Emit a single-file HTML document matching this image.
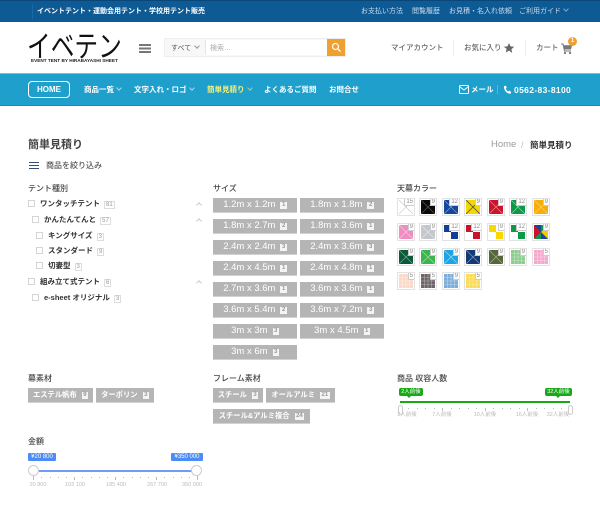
<!DOCTYPE html>
<html lang="ja"><head><meta charset="utf-8"><title>簡単見積り</title>
<style>
html,body{margin:0;padding:0;background:#fff}
body{width:600px;height:509px;position:relative;overflow:hidden;font-family:"Liberation Sans","Noto Sans CJK JP",sans-serif;color:#333}
.a{position:absolute}
.t{position:absolute;white-space:nowrap;line-height:12px;height:12px;margin-top:1px}
.top{font-size:7px;color:#c9dcea;top:5px}
.nav{font-size:7.5px;color:#fff;font-weight:700;top:83px}
.hd{font-size:7.5px;color:#666;top:41px;font-weight:500}
.h{font-size:8px;color:#444;font-weight:500}
.li{font-size:7.5px;color:#333;font-weight:700}
.li i{font-style:normal;font-weight:400;font-size:6px;color:#999;border:1px solid #ddd;padding:0 1px;margin-left:4px;line-height:6px;display:inline-block;vertical-align:0}
.cb{position:absolute;width:5px;height:5px;border:1px solid #d5d5d5;background:#fff}
.up{position:absolute;width:3px;height:3px;border-left:1px solid #ccc;border-top:1px solid #ccc;transform:rotate(45deg)}
.b{position:absolute;height:14px;background:#b5b5b5;border-bottom:1.5px solid #d2d2d2;color:#fff;font-size:9.5px;line-height:14px;white-space:nowrap;display:flex;align-items:center;justify-content:center}
.b i{font-style:normal;font-size:6px;font-weight:700;background:#f4f4f4;color:#999;padding:0 1.5px;margin-left:5px;display:block;line-height:7px}
.f{font-size:7.3px;font-weight:700}
.s{position:absolute;width:14px;height:14px;border:1.5px solid #e2e2e2;padding:1px;background:#fff;overflow:hidden}
.s svg{display:block;width:14px;height:14px}
.s b{position:absolute;right:0;top:0;background:#fff;border:1px solid #ccc;border-width:0 0 1px 1px;font-size:6px;font-weight:400;color:#888;line-height:6px;padding:0 1px}
.chev{display:inline-block;width:3px;height:3px;border-right:1px solid currentColor;border-bottom:1px solid currentColor;transform:rotate(45deg);margin-left:3px;vertical-align:2px;opacity:.6}
.tick{position:absolute;width:1px;background:#bbb}
.n{position:absolute;font-size:5.5px;color:#bbb;white-space:nowrap;line-height:7px;transform:translateX(-50%)}
</style></head><body>

<div class="a" style="left:0;top:0;width:600px;height:22px;background:#0e5a94;border-top:1px solid #0a4678;box-sizing:border-box"></div>
<div class="a" style="left:32px;top:4px;width:1px;height:15px;background:#1a6aa5"></div>
<div class="t" style="left:37px;top:5px;font-size:7px;color:#fff;font-weight:700">イベントテント・運動会用テント・学校用テント販売</div>
<div class="t top" style="left:361px">お支払い方法</div>
<div class="t top" style="left:412px">閲覧履歴</div>
<div class="t top" style="left:449px">お見積・名入れ依頼</div>
<div class="t top" style="left:519px">ご利用ガイド<span class="chev"></span></div>

<div class="t" style="left:27px;top:28px;height:30px;line-height:30px;font-size:30px;color:#111;transform-origin:0 50%;transform:scaleX(.79);font-family:'Noto Sans CJK JP',sans-serif;font-weight:400">イベテン</div>
<div class="t" style="left:31px;top:54px;font-size:4.7px;color:#222;font-weight:700">EVENT TENT BY HIRABAYASHI SHEET</div>

<div class="a" style="left:139px;top:44px;width:12px;height:1.5px;background:#777;box-shadow:0 3.5px 0 #777,0 7px 0 #777"></div>
<div class="a" style="left:165px;top:39px;width:180px;height:17px;background:#f8f8f8;box-shadow:0 0 0 1px #eee"></div>
<div class="a" style="left:205px;top:40px;width:122px;height:15px;background:#fff;border-left:1px solid #e5e5e5"></div>
<div class="t" style="left:171px;top:42px;font-size:7px;color:#555">すべて<span class="chev" style="margin-left:4px"></span></div>
<div class="t" style="left:210px;top:42px;font-size:7px;color:#aaa">検索…</div>
<div class="a" style="left:327px;top:39px;width:18px;height:17px;background:#f0a030"></div>
<svg class="a" style="left:331px;top:42px" width="11" height="11" viewBox="0 0 11 11"><circle cx="4.5" cy="4.5" r="3" fill="none" stroke="#fff" stroke-width="1.2"/><path d="M6.8 6.8L9.5 9.500" stroke="#fff" stroke-width="1.3"/></svg>

<div class="t hd" style="left:391px">マイアカウント</div>
<div class="a" style="left:453px;top:40px;width:1px;height:16px;background:#eee"></div>
<div class="t hd" style="left:464px">お気に入り</div>
<svg class="a" style="left:503px;top:42px" width="12" height="12" viewBox="0 0 12 12"><path d="M6 1l1.5 3.4 3.700.4-2.800 2.500.8 3.700L6 8.600l-3.200 1.900.8-3.700L.8 4.800l3.700-.4z" fill="#666"/></svg>
<div class="a" style="left:525px;top:40px;width:1px;height:16px;background:#eee"></div>
<div class="t hd" style="left:536px">カート</div>
<svg class="a" style="left:560px;top:43px" width="13" height="12" viewBox="0 0 13 12"><path d="M1 1h2l1.500 7h6.500" fill="none" stroke="#777" stroke-width="1"/><path d="M3.400 2.200h8.600l-1 4.300H4.300z" fill="#777"/><circle cx="5" cy="10" r="1.100" fill="#777"/><circle cx="10" cy="10" r="1.100" fill="#777"/></svg>
<div class="a" style="left:568px;top:37px;width:9px;height:9px;border-radius:50%;background:#f0a030;color:#fff;font-size:6px;line-height:9px;text-align:center;font-weight:700">1</div>

<div class="a" style="left:0;top:73px;width:600px;height:33px;background:#1f9fcc;border-top:1px solid #6cc3e2;border-bottom:1px solid #1890bb;box-sizing:border-box"></div>
<div class="a" style="left:28px;top:81px;width:40px;height:15px;border:1.5px solid #fff;border-radius:4px;color:#fff;font-size:8px;font-weight:700;line-height:15px;text-align:center">HOME</div>
<div class="t nav" style="left:84px">商品一覧<span class="chev"></span></div>
<div class="t nav" style="left:134px">文字入れ・ロゴ<span class="chev"></span></div>
<div class="t nav" style="left:207px;color:#f6f07a">簡単見積り<span class="chev"></span></div>
<div class="t nav" style="left:264px">よくあるご質問</div>
<div class="t nav" style="left:329px">お問合せ</div>
<svg class="a" style="left:459px;top:85px" width="10" height="9" viewBox="0 0 10 9"><rect x=".5" y=".5" width="9" height="8" rx="1" fill="none" stroke="#fff"/><path d="M1 2l4 3 4-3" fill="none" stroke="#fff"/></svg>
<div class="t nav" style="left:471px">メール</div>
<div class="a" style="left:497px;top:85px;width:1px;height:9px;background:#59b8da"></div>
<svg class="a" style="left:503px;top:85px" width="9" height="10" viewBox="0 0 9 10"><path d="M1 1.200L2.800.6l1 2.200-1 .8c.4 1.200 1.200 2.200 2.400 2.900l1-.9 2 1.400-.7 1.700C4 9 .6 5.200 1 1.200z" fill="#fff"/></svg>
<div class="t nav" style="left:514px;font-size:8.5px;letter-spacing:.35px">0562-83-8100</div>

<div class="t" style="left:28px;top:138px;font-size:11px;color:#444;font-weight:700">簡単見積り</div>
<div class="t" style="left:491px;top:138px;font-size:9.5px;color:#999">Home</div>
<div class="t" style="left:521px;top:138px;font-size:9px;color:#bbb">/</div>
<div class="t" style="left:530px;top:138px;font-size:8.5px;color:#333;font-weight:700">簡単見積り</div>
<div class="a" style="left:29px;top:162px;width:10px;height:1px;background:#34506e;box-shadow:0 3px 0 #34506e,0 6px 0 #34506e"></div>
<div class="t" style="left:46px;top:159px;font-size:8px;color:#555;font-weight:500">商品を絞り込み</div>

<div class="t h" style="left:28px;top:182px">テント種別</div>
<div class="cb" style="left:28px;top:200px"></div><div class="t li" style="left:40px;top:197px">ワンタッチテント<i>81</i></div><div class="up" style="left:197px;top:203px"></div>
<div class="cb" style="left:32px;top:216px"></div><div class="t li" style="left:44px;top:213px">かんたんてんと<i>57</i></div><div class="up" style="left:197px;top:219px"></div>
<div class="cb" style="left:36px;top:232px"></div><div class="t li" style="left:48px;top:229px">キングサイズ<i>3</i></div>
<div class="cb" style="left:36px;top:247px"></div><div class="t li" style="left:48px;top:244px">スタンダード<i>9</i></div>
<div class="cb" style="left:36px;top:262px"></div><div class="t li" style="left:48px;top:259px">切妻型<i>3</i></div>
<div class="cb" style="left:28px;top:278px"></div><div class="t li" style="left:40px;top:275px">組み立て式テント<i>6</i></div><div class="up" style="left:197px;top:281px"></div>
<div class="cb" style="left:32px;top:294px"></div><div class="t li" style="left:44px;top:291px">e-sheet オリジナル<i>3</i></div>

<div class="t h" style="left:213px;top:182px">サイズ</div>
<div class="b" style="left:213px;top:198px;width:84px">1.2m x 1.2m<i>1</i></div>
<div class="b" style="left:300px;top:198px;width:84px">1.8m x 1.8m<i>2</i></div>
<div class="b" style="left:213px;top:219px;width:84px">1.8m x 2.7m<i>2</i></div>
<div class="b" style="left:300px;top:219px;width:84px">1.8m x 3.6m<i>1</i></div>
<div class="b" style="left:213px;top:240px;width:84px">2.4m x 2.4m<i>3</i></div>
<div class="b" style="left:300px;top:240px;width:84px">2.4m x 3.6m<i>3</i></div>
<div class="b" style="left:213px;top:261px;width:84px">2.4m x 4.5m<i>1</i></div>
<div class="b" style="left:300px;top:261px;width:84px">2.4m x 4.8m<i>1</i></div>
<div class="b" style="left:213px;top:282px;width:84px">2.7m x 3.6m<i>1</i></div>
<div class="b" style="left:300px;top:282px;width:84px">3.6m x 3.6m<i>1</i></div>
<div class="b" style="left:213px;top:303px;width:84px">3.6m x 5.4m<i>2</i></div>
<div class="b" style="left:300px;top:303px;width:84px">3.6m x 7.2m<i>3</i></div>
<div class="b" style="left:213px;top:324px;width:84px">3m x 3m<i>3</i></div>
<div class="b" style="left:300px;top:324px;width:84px">3m x 4.5m<i>1</i></div>
<div class="b" style="left:213px;top:345px;width:84px">3m x 6m<i>3</i></div>

<div class="t h" style="left:397px;top:182px">天幕カラー</div>

<div class="s" style="left:397px;top:198px"><svg viewBox="0 0 14 14"><rect width="14" height="14" fill="#fff"/><path d="M0 0L14 14M14 0L0 14" stroke="#ccc" stroke-width=".7"/></svg><b>15</b></div>
<div class="s" style="left:419px;top:198px"><svg viewBox="0 0 14 14"><rect width="14" height="14" fill="#0a0a0a"/><path d="M0 0L14 14M14 0L0 14" stroke="#555" stroke-width=".7"/></svg><b>9</b></div>
<div class="s" style="left:442px;top:198px"><svg viewBox="0 0 14 14"><rect width="14" height="14" fill="#14489c"/><path d="M0 0L14 14M14 0L0 14" stroke="#7fa0d0" stroke-width=".7"/></svg><b>12</b></div>
<div class="s" style="left:464px;top:198px"><svg viewBox="0 0 14 14"><rect width="14" height="14" fill="#f5d800"/><path d="M0 0L14 14M14 0L0 14" stroke="#555" stroke-width=".8"/></svg><b>9</b></div>
<div class="s" style="left:487px;top:198px"><svg viewBox="0 0 14 14"><rect width="14" height="14" fill="#c8142c"/><path d="M0 0L14 14M14 0L0 14" stroke="#e88" stroke-width=".7"/></svg><b>9</b></div>
<div class="s" style="left:509px;top:198px"><svg viewBox="0 0 14 14"><rect width="14" height="14" fill="#0c9a48"/><path d="M0 0L14 14M14 0L0 14" stroke="#8cd0a8" stroke-width=".7"/></svg><b>12</b></div>
<div class="s" style="left:532px;top:198px"><svg viewBox="0 0 14 14"><rect width="14" height="14" fill="#f8ae08"/><path d="M0 0L14 14M14 0L0 14" stroke="#fbd070" stroke-width=".7"/></svg><b>9</b></div>

<div class="s" style="left:397px;top:223px"><svg viewBox="0 0 14 14"><rect width="14" height="14" fill="#f08cc0"/><path d="M0 0L14 14M14 0L0 14" stroke="#f9c8e0" stroke-width=".7"/></svg><b>9</b></div>
<div class="s" style="left:419px;top:223px"><svg viewBox="0 0 14 14"><rect width="14" height="14" fill="#c4c8cc"/><path d="M0 0L14 14M14 0L0 14" stroke="#e4e6e8" stroke-width=".7"/></svg><b>9</b></div>
<div class="s" style="left:442px;top:223px"><svg viewBox="0 0 14 14"><rect width="14" height="14" fill="#fff"/><rect width="7" height="7" fill="#123f96"/><rect x="7" y="7" width="7" height="7" fill="#123f96"/></svg><b>12</b></div>
<div class="s" style="left:464px;top:223px"><svg viewBox="0 0 14 14"><rect width="14" height="14" fill="#fff"/><rect width="7" height="7" fill="#c8142c"/><rect x="7" y="7" width="7" height="7" fill="#c8142c"/></svg><b>12</b></div>
<div class="s" style="left:487px;top:223px"><svg viewBox="0 0 14 14"><rect width="14" height="14" fill="#fff"/><rect width="7" height="7" fill="#f8d800"/><rect x="7" y="7" width="7" height="7" fill="#f8d800"/></svg><b>9</b></div>
<div class="s" style="left:509px;top:223px"><svg viewBox="0 0 14 14"><rect width="14" height="14" fill="#fff"/><rect width="7" height="7" fill="#0c9a48"/><rect x="7" y="7" width="7" height="7" fill="#0c9a48"/></svg><b>12</b></div>
<div class="s" style="left:532px;top:223px"><svg viewBox="0 0 14 14"><rect width="14" height="14" fill="#14489c"/><path d="M0 0L7 7L0 14z" fill="#c8142c"/><path d="M14 14L7 7L14 0z" fill="#f8ca00"/><path d="M7 0L14 0L7 7z" fill="#0c9a48"/><path d="M0 14L7 14L7 7z" fill="#0c9a48"/></svg><b>9</b></div>

<div class="s" style="left:397px;top:248px"><svg viewBox="0 0 14 14"><rect width="14" height="14" fill="#0c5a3a"/><path d="M0 0L14 14M14 0L0 14" stroke="#7aa896" stroke-width=".7"/></svg><b>9</b></div>
<div class="s" style="left:419px;top:248px"><svg viewBox="0 0 14 14"><rect width="14" height="14" fill="#3cb450"/><path d="M0 0L14 14M14 0L0 14" stroke="#a0dcaa" stroke-width=".7"/></svg><b>9</b></div>
<div class="s" style="left:442px;top:248px"><svg viewBox="0 0 14 14"><rect width="14" height="14" fill="#1ca4e4"/><path d="M0 0L14 14M14 0L0 14" stroke="#a0d8f4" stroke-width=".7"/></svg><b>9</b></div>
<div class="s" style="left:464px;top:248px"><svg viewBox="0 0 14 14"><rect width="14" height="14" fill="#123a74"/><path d="M0 0L14 14M14 0L0 14" stroke="#7f98bc" stroke-width=".7"/></svg><b>9</b></div>
<div class="s" style="left:487px;top:248px"><svg viewBox="0 0 14 14"><rect width="14" height="14" fill="#56683a"/><path d="M0 0L14 14M14 0L0 14" stroke="#a4b08c" stroke-width=".7"/></svg><b>9</b></div>
<div class="s" style="left:509px;top:248px"><svg viewBox="0 0 14 14"><rect width="14" height="14" fill="#8ccc8c"/><path d="M3.500 0V14M7 0V14M10.500 0V14M0 3.500H14M0 7H14M0 10.500H14" stroke="#c4e8c4" stroke-width=".6"/></svg><b>9</b></div>
<div class="s" style="left:532px;top:248px"><svg viewBox="0 0 14 14"><rect width="14" height="14" fill="#f4a8cc"/><path d="M3.500 0V14M7 0V14M10.500 0V14M0 3.500H14M0 7H14M0 10.500H14" stroke="#fad8e8" stroke-width=".6"/></svg><b>5</b></div>

<div class="s" style="left:397px;top:272px"><svg viewBox="0 0 14 14"><rect width="14" height="14" fill="#fcd8c8"/><path d="M3.500 0V14M7 0V14M10.500 0V14M0 3.500H14M0 7H14M0 10.500H14" stroke="#feeee6" stroke-width=".6"/></svg><b>5</b></div>
<div class="s" style="left:419px;top:272px"><svg viewBox="0 0 14 14"><rect width="14" height="14" fill="#6c6468"/><path d="M3.500 0V14M7 0V14M10.500 0V14M0 3.500H14M0 7H14M0 10.500H14" stroke="#b4aeb0" stroke-width=".6"/></svg><b>5</b></div>
<div class="s" style="left:442px;top:272px"><svg viewBox="0 0 14 14"><rect width="14" height="14" fill="#7cacdc"/><path d="M3.500 0V14M7 0V14M10.500 0V14M0 3.500H14M0 7H14M0 10.500H14" stroke="#c0d8f0" stroke-width=".6"/></svg><b>9</b></div>
<div class="s" style="left:464px;top:272px"><svg viewBox="0 0 14 14"><rect width="14" height="14" fill="#fcdc54"/><path d="M3.500 0V14M7 0V14M10.500 0V14M0 3.500H14M0 7H14M0 10.500H14" stroke="#feeea4" stroke-width=".6"/></svg><b>5</b></div>

<div class="t h" style="left:28px;top:372px">幕素材</div>
<div class="b f" style="left:28px;top:388px;width:65px">エステル帆布<i>9</i></div>
<div class="b f" style="left:96px;top:388px;width:58px">ターポリン<i>3</i></div>
<div class="t h" style="left:213px;top:372px">フレーム素材</div>
<div class="b f" style="left:213px;top:388px;width:50px">スチール<i>3</i></div>
<div class="b f" style="left:266px;top:388px;width:69px">オールアルミ<i>21</i></div>
<div class="b f" style="left:213px;top:409px;width:97px">スチール&amp;アルミ複合<i>24</i></div>

<div class="t h" style="left:397px;top:372px">商品 収容人数</div>
<div class="a" style="left:399px;top:388px;width:24px;height:8px;background:#18a818;border-radius:2px;color:#fff;font-size:5.5px;line-height:8px;text-align:center;white-space:nowrap">2人前後</div>
<div class="a" style="left:545px;top:388px;width:27px;height:8px;background:#18a818;border-radius:2px;color:#fff;font-size:5.5px;line-height:8px;text-align:center;white-space:nowrap">32人前後</div>
<svg class="a" style="left:407px;top:396px" width="4" height="2" viewBox="0 0 4 2"><path d="M0 0h4L2 2z" fill="#18a818"/></svg>
<svg class="a" style="left:556px;top:396px" width="4" height="2" viewBox="0 0 4 2"><path d="M0 0h4L2 2z" fill="#18a818"/></svg>
<div class="a" style="left:400px;top:401px;width:170px;height:2px;background:#18a818"></div>
<div class="a" style="left:398px;top:405px;width:3px;height:8px;border:1px solid #ccc;border-radius:3px;background:#fff"></div>
<div class="a" style="left:568px;top:405px;width:3px;height:8px;border:1px solid #ccc;border-radius:3px;background:#fff"></div>
<div class="tick" style="left:408px;top:408px;height:1px"></div>
<div class="tick" style="left:417px;top:408px;height:1px"></div>
<div class="tick" style="left:425px;top:408px;height:1px"></div>
<div class="tick" style="left:434px;top:408px;height:1px"></div>
<div class="tick" style="left:442px;top:408px;height:3px"></div>
<div class="tick" style="left:451px;top:408px;height:1px"></div>
<div class="tick" style="left:459px;top:408px;height:1px"></div>
<div class="tick" style="left:468px;top:408px;height:1px"></div>
<div class="tick" style="left:476px;top:408px;height:1px"></div>
<div class="tick" style="left:485px;top:408px;height:3px"></div>
<div class="tick" style="left:493px;top:408px;height:1px"></div>
<div class="tick" style="left:502px;top:408px;height:1px"></div>
<div class="tick" style="left:510px;top:408px;height:1px"></div>
<div class="tick" style="left:519px;top:408px;height:1px"></div>
<div class="tick" style="left:527px;top:408px;height:3px"></div>
<div class="tick" style="left:536px;top:408px;height:1px"></div>
<div class="tick" style="left:544px;top:408px;height:1px"></div>
<div class="tick" style="left:553px;top:408px;height:1px"></div>
<div class="tick" style="left:561px;top:408px;height:1px"></div>
<div class="n" style="left:407px;top:412px">2人前後</div>
<div class="n" style="left:442px;top:412px">7人前後</div>
<div class="n" style="left:485px;top:412px">10人前後</div>
<div class="n" style="left:527px;top:412px">16人前後</div>
<div class="n" style="left:558px;top:412px">32人前後</div>

<div class="t h" style="left:28px;top:435px">金額</div>
<div class="a" style="left:28px;top:453px;width:28px;height:8px;background:#4d8cf5;border-radius:1px;color:#fff;font-size:6px;line-height:8px;text-align:center">¥20 800</div>
<div class="a" style="left:171px;top:453px;width:32px;height:8px;background:#4d8cf5;border-radius:1px;color:#fff;font-size:6px;line-height:8px;text-align:center">¥350 000</div>
<div class="a" style="left:34px;top:470px;width:163px;height:2px;background:#6f9ff5"></div>
<div class="a" style="left:28px;top:465px;width:9px;height:9px;border:1px solid #ccc;border-radius:50%;background:#fff"></div>
<div class="a" style="left:191px;top:465px;width:9px;height:9px;border:1px solid #ccc;border-radius:50%;background:#fff"></div>
<div class="tick" style="left:33px;top:476px;height:4px"></div>
<div class="tick" style="left:74px;top:477px;height:3px"></div>
<div class="tick" style="left:115px;top:477px;height:3px"></div>
<div class="tick" style="left:156px;top:477px;height:3px"></div>
<div class="tick" style="left:197px;top:476px;height:4px"></div>
<div class="tick" style="left:41px;top:477px;height:1px"></div>
<div class="tick" style="left:50px;top:477px;height:1px"></div>
<div class="tick" style="left:58px;top:477px;height:1px"></div>
<div class="tick" style="left:66px;top:477px;height:1px"></div>
<div class="tick" style="left:82px;top:477px;height:1px"></div>
<div class="tick" style="left:91px;top:477px;height:1px"></div>
<div class="tick" style="left:99px;top:477px;height:1px"></div>
<div class="tick" style="left:107px;top:477px;height:1px"></div>
<div class="tick" style="left:123px;top:477px;height:1px"></div>
<div class="tick" style="left:132px;top:477px;height:1px"></div>
<div class="tick" style="left:140px;top:477px;height:1px"></div>
<div class="tick" style="left:148px;top:477px;height:1px"></div>
<div class="tick" style="left:164px;top:477px;height:1px"></div>
<div class="tick" style="left:173px;top:477px;height:1px"></div>
<div class="tick" style="left:181px;top:477px;height:1px"></div>
<div class="tick" style="left:189px;top:477px;height:1px"></div>
<div class="n" style="left:38px;top:482px">20 800</div>
<div class="n" style="left:75px;top:482px">103 100</div>
<div class="n" style="left:116px;top:482px">185 400</div>
<div class="n" style="left:157px;top:482px">267 700</div>
<div class="n" style="left:192px;top:482px">350 000</div>

</body></html>
